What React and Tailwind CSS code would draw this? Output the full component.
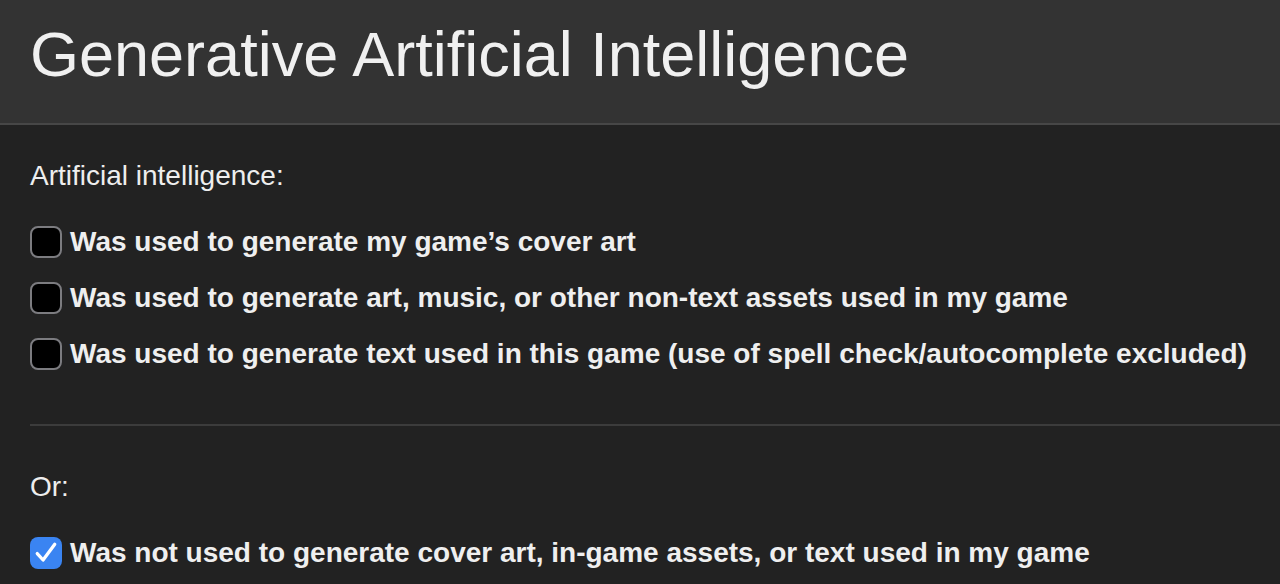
import React from 'react';

const options = [
  { label: 'Was used to generate my game’s cover art', checked: false },
  { label: 'Was used to generate art, music, or other non-text assets used in my game', checked: false },
  { label: 'Was used to generate text used in this game (use of spell check/autocomplete excluded)', checked: false },
];

function Box({ checked }) {
  if (checked) {
    return (
      <span className="flex h-[32px] w-[32px] shrink-0 items-center justify-center rounded-[8px] bg-[#3a84f2]">
        <svg viewBox="0 0 24 24" className="h-[28px] w-[28px]" fill="none" stroke="white" strokeWidth="2.8" strokeLinecap="round" strokeLinejoin="round">
          <path d="M4.5 12.5l5 5.5L19.5 4.5" />
        </svg>
      </span>
    );
  }
  return <span className="block h-[32px] w-[32px] shrink-0 rounded-[8px] border-2 border-[#7c7c80] bg-black" />;
}

function Row({ label, checked }) {
  return (
    <label className="flex h-[56px] items-center gap-[8px]">
      <Box checked={checked} />
      <span className="text-[28px] font-bold text-[#efefef]">{label}</span>
    </label>
  );
}

export default function App() {
  return (
    <div className="h-[584px] w-[1280px] overflow-hidden bg-[#222222] font-['Liberation_Sans',Arial,sans-serif]">
      <header className="flex h-[125px] items-start border-b-2 border-[#474747] bg-[#333333] pl-[30px] pt-[16px]">
        <h1 className="text-[63px] leading-[76px] text-[#f0f0f0]">Generative Artificial Intelligence</h1>
      </header>
      <div className="pl-[30px]">
        <p className="mt-[36px] text-[28px] leading-[30px] text-[#eeeeee]">Artificial intelligence:</p>
        <div className="mt-[23px] flex flex-col">
          {options.map((o) => (
            <Row key={o.label} {...o} />
          ))}
        </div>
        <div className="mt-[42px] h-[2px] bg-[#3c3c3c]" />
        <p className="mt-[46px] text-[28px] leading-[30px] text-[#eeeeee]">Or:</p>
        <div className="mt-[23px]">
          <Row label="Was not used to generate cover art, in-game assets, or text used in my game" checked />
        </div>
      </div>
    </div>
  );
}
